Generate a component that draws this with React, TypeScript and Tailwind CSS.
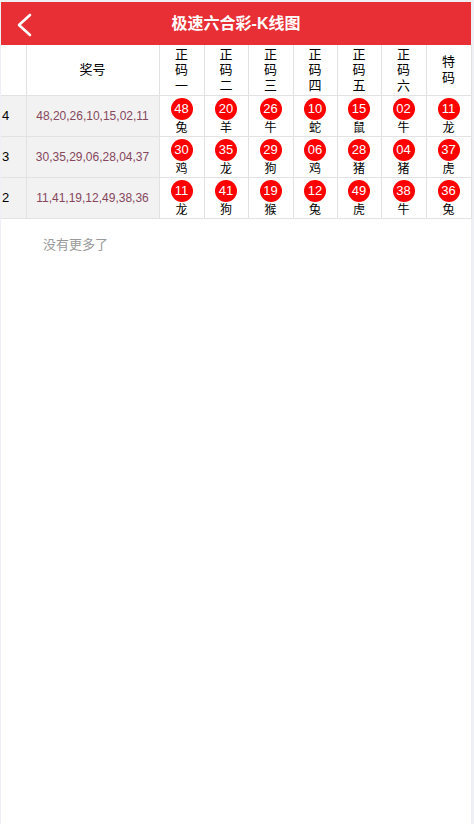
import React from "react";

const rows = [
  { id: "4", nums: ["48", "20", "26", "10", "15", "02", "11"], z: ["兔", "羊", "牛", "蛇", "鼠", "牛", "龙"] },
  { id: "3", nums: ["30", "35", "29", "06", "28", "04", "37"], z: ["鸡", "龙", "狗", "鸡", "猪", "猪", "虎"] },
  { id: "2", nums: ["11", "41", "19", "12", "49", "38", "36"], z: ["龙", "狗", "猴", "兔", "虎", "牛", "兔"] },
];

const heads = [["正", "码", "一"], ["正", "码", "二"], ["正", "码", "三"], ["正", "码", "四"], ["正", "码", "五"], ["正", "码", "六"], ["特", "码"]];

export default function App() {
  return (
    <div
      className="w-[474px] h-[824px] bg-[#eef0f5] pt-[2px] pl-[1px] pr-[3px] overflow-hidden"
      style={{ fontFamily: '"Liberation Sans", Arial, "Noto Sans CJK SC", sans-serif' }}
    >
      <div className="bg-white h-full">
        <div className="h-[43px] bg-[#e82f36] flex items-center relative">
          <svg className="absolute left-[13px] top-[11px]" width="20" height="24" viewBox="0 0 20 24" fill="none">
            <path d="M16 2 L5 12 L16 22" stroke="white" strokeWidth="2.6" strokeLinecap="round" strokeLinejoin="round" />
          </svg>
          <div className="w-full text-center text-white font-bold text-[16px] leading-none">极速六合彩-K线图</div>
        </div>
        <table className="w-[470px] table-fixed border-collapse text-[13px] text-black">
          <colgroup>
            <col className="w-[25px]" />
            <col className="w-[133px]" />
            <col className="w-[45px]" />
            <col className="w-[44px]" />
            <col className="w-[45px]" />
            <col className="w-[44px]" />
            <col className="w-[44px]" />
            <col className="w-[45px]" />
            <col className="w-[45px]" />
          </colgroup>
          <thead>
            <tr className="h-[50px]">
              <th className="border border-[#e2e2e2] border-t-0 border-l-0 font-normal"></th>
              <th className="border border-[#e2e2e2] border-t-0 font-normal">奖号</th>
              {heads.map((h, i) => (
                <th key={i} className="border border-[#e2e2e2] border-t-0 font-normal leading-[15.5px] p-0">
                  {h.map((c, j) => (
                    <div key={j}>{c}</div>
                  ))}
                </th>
              ))}
            </tr>
          </thead>
          <tbody>
            {rows.map((r) => (
              <tr key={r.id} className="h-[41px]">
                <td className="border border-[#e2e2e2] border-l-0 bg-[#f2f2f2] text-left pl-[1px] text-[13px]">{r.id}</td>
                <td className="border border-[#e2e2e2] bg-[#f2f2f2] text-center text-[12px] text-[#86475c]">{r.nums.join(",")}</td>
                {r.nums.map((n, i) => (
                  <td key={i} className="border border-[#e2e2e2] p-0 text-center align-top">
                    <div className="flex flex-col items-center pt-[2px]">
                      <div className="w-[22px] h-[22px] rounded-full bg-[#ff0000] text-white text-[13px] flex items-center justify-center">{n}</div>
                      <div className="text-[12px] leading-[16px]">{r.z[i]}</div>
                    </div>
                  </td>
                ))}
              </tr>
            ))}
          </tbody>
        </table>
        <div className="pl-[42px] pt-[16px] text-[13px] text-[#999999]">没有更多了</div>
      </div>
    </div>
  );
}
